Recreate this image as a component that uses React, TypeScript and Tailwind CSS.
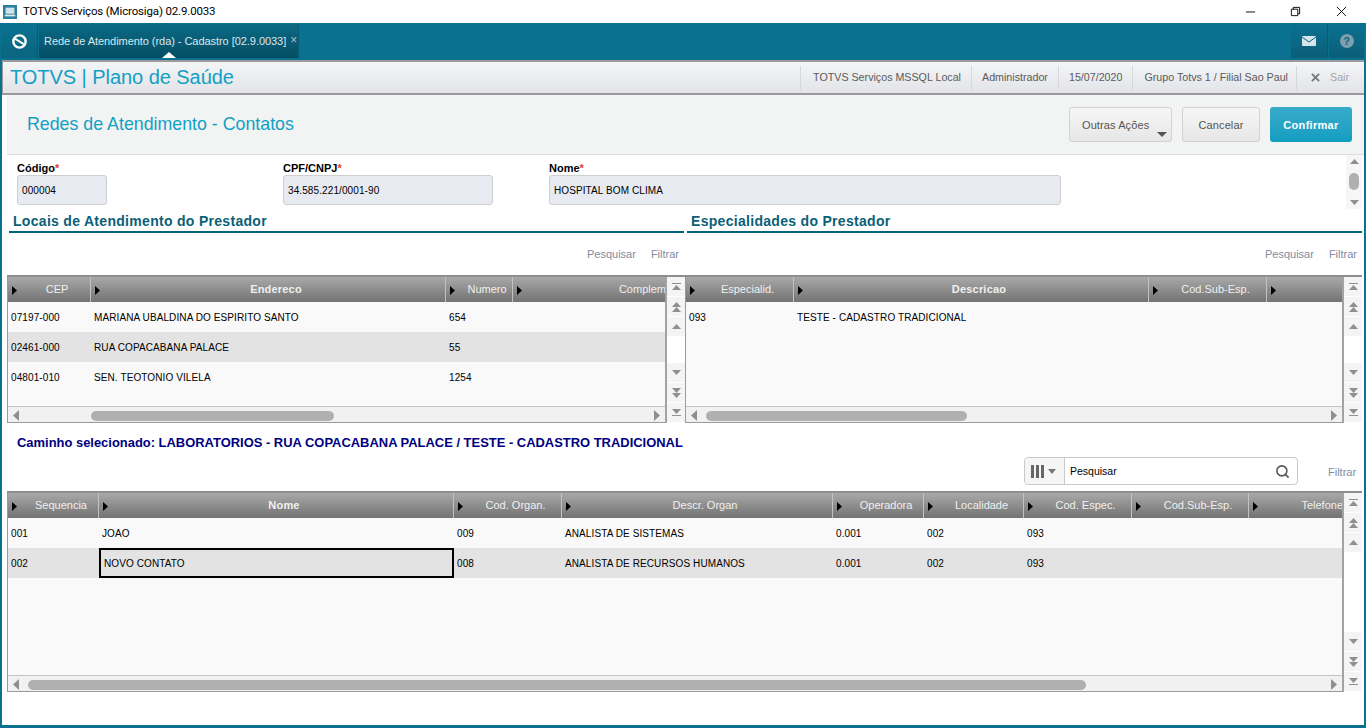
import { Search } from "lucide-react";

type Col = { label: string; w: string; bold?: boolean; right?: boolean };

const LEFT_COLS: Col[] = [
  { label: "CEP", w: "w-[83px]" },
  { label: "Endereco", w: "w-[355px]", bold: true },
  { label: "Numero", w: "w-[67px]" },
  { label: "Complem", w: "w-[153px]", right: true },
];
const RIGHT_COLS: Col[] = [
  { label: "Especialid.", w: "w-[108px]" },
  { label: "Descricao", w: "w-[355px]", bold: true },
  { label: "Cod.Sub-Esp.", w: "w-[118px]" },
  { label: "", w: "w-[75px]" },
];
const BOTTOM_COLS: Col[] = [
  { label: "Sequencia", w: "w-[91px]" },
  { label: "Nome", w: "w-[355px]", bold: true },
  { label: "Cod. Organ.", w: "w-[108px]" },
  { label: "Descr. Organ", w: "w-[271px]" },
  { label: "Operadora", w: "w-[91px]" },
  { label: "Localidade", w: "w-[100px]" },
  { label: "Cod. Espec.", w: "w-[108px]" },
  { label: "Cod.Sub-Esp.", w: "w-[117px]" },
  { label: "Telefone", w: "w-[94px]", right: true },
];

function Tri({ dir, className = "" }: { dir: "up" | "down" | "left" | "right"; className?: string }) {
  const points = {
    up: "0,7 5,0 10,7",
    down: "0,0 10,0 5,7",
    left: "7,0 7,10 0,5",
    right: "0,0 7,5 0,10",
  }[dir];
  const size = dir === "up" || dir === "down" ? "w-[9px] h-[5px]" : "w-[6px] h-[11px]";
  return (
    <svg
      viewBox={dir === "up" || dir === "down" ? "0 0 10 7" : "0 0 7 10"}
      preserveAspectRatio="none"
      className={`${size} fill-[#8f8f8f] shrink-0 ${className}`}
    >
      <polygon points={points} />
    </svg>
  );
}

function VScroll() {
  const btn = "h-[20px] flex flex-col items-center justify-center bg-[#f4f4f4] border-b border-white gap-px";
  return (
    <div className="w-[20px] shrink-0 flex flex-col justify-between bg-white border-l-2 border-[#a3a3a3]">
      <div className="flex flex-col">
        <div className={btn}>
          <div className="w-[9px] h-px bg-[#8f8f8f]" />
          <Tri dir="up" />
        </div>
        <div className={btn}>
          <Tri dir="up" className="-mb-px" />
          <Tri dir="up" />
        </div>
        <div className={btn}>
          <Tri dir="up" />
        </div>
      </div>
      <div className="flex flex-col">
        <div className={btn}>
          <Tri dir="down" />
        </div>
        <div className={btn}>
          <Tri dir="down" className="-mb-px" />
          <Tri dir="down" />
        </div>
        <div className={btn}>
          <Tri dir="down" />
          <div className="w-[9px] h-px bg-[#8f8f8f]" />
        </div>
      </div>
    </div>
  );
}

function HScroll({ left, width }: { left: string; width: string }) {
  return (
    <div className="h-[16px] shrink-0 flex items-center pt-[2px] bg-[#f1f1f1] border-t border-[#c4c4c4]">
      <Tri dir="left" className="ml-[5px]" />
      <div className={`${left} ${width} h-[10px] rounded-[5px] bg-[#b0b0b0]`} />
      <Tri dir="right" className="ml-auto mr-[5px]" />
    </div>
  );
}

function Grid({
  cols,
  rows,
  selected,
  focusCol,
  thumbLeft,
  thumbWidth,
  className,
}: {
  cols: Col[];
  rows: string[][];
  selected?: number;
  focusCol?: number;
  thumbLeft: string;
  thumbWidth: string;
  className: string;
}) {
  return (
    <div className={`flex ${className} border-t-2 border-[#8e8e8e]`}>
      <div className="flex-1 min-w-0 flex flex-col border-l border-b border-[#9a9a9a]">
        <div className="h-[25px] shrink-0 flex overflow-hidden bg-gradient-to-b from-[#a9a9a9] to-[#737373]">
          {cols.map((c, i) => (
            <div
              key={i}
              className={`${c.w} shrink-0 h-full flex items-center border-r border-[#c2c2c2] pl-[4px] last:border-r-0`}
            >
              <svg viewBox="0 0 5 9" className="w-[5px] h-[9px] fill-black shrink-0 mt-[2px]">
                <polygon points="0,0 5,4.5 0,9" />
              </svg>
              <span
                className={`flex-1 min-w-0 pl-[7px] whitespace-nowrap overflow-hidden text-[#f0f0f0] ${
                  c.right ? "text-right" : "text-center"
                } ${c.bold ? "font-bold tracking-[0.2px]" : ""}`}
              >
                {c.label}
              </span>
            </div>
          ))}
        </div>
        <div className="flex-1 min-h-0 bg-[#f9f9f9]">
          {rows.map((r, ri) => (
            <div
              key={ri}
              className={`h-[30px] flex items-center text-black text-[10px] tracking-[0.1px] ${
                selected === ri ? "bg-[#e3e3e3]" : ""
              }`}
            >
              {r.map((v, ci) => (
                <div
                  key={ci}
                  className={`${cols[ci].w} shrink-0 h-full flex items-center overflow-hidden whitespace-nowrap ${
                    selected === ri && focusCol === ci ? "border-2 border-black pl-[3px]" : "pl-[3px]"
                  }`}
                >
                  {v}
                </div>
              ))}
            </div>
          ))}
        </div>
        <HScroll left={thumbLeft} width={thumbWidth} />
      </div>
      <VScroll />
    </div>
  );
}

function Field({ label, value, width }: { label: string; value: string; width: string }) {
  return (
    <div className={`${width} shrink-0`}>
      <div className="h-[14px] flex items-center font-bold text-black text-[11px]">
        {label}
        <span className="text-[#e53935]">*</span>
      </div>
      <div className="h-[30px] flex items-center px-[4px] rounded-[3px] bg-[#e7eaf1] border border-[#cfcfcf] text-black text-[10px] tracking-[0.1px]">
        {value}
      </div>
    </div>
  );
}

function SectionTitle({ children, className }: { children: string; className: string }) {
  return (
    <div className={`h-[24px] flex items-end pl-[4px] border-b-2 border-[#00647c] text-[#0b6078] font-bold text-[14px] leading-[19px] tracking-[0.3px] ${className}`}>
      {children}
    </div>
  );
}

function TopAction({ children }: { children: string }) {
  return <div className="text-[#7f8ba3] text-[11px]">{children}</div>;
}

export default function App() {
  return (
    <div
      className="w-[1366px] h-[728px] overflow-hidden flex flex-col bg-white text-[11px]"
      style={{ fontFamily: '"Liberation Sans", Arial, sans-serif' }}
    >
      {/* window title bar */}
      <div className="h-[23px] shrink-0 flex items-center bg-white">
        <svg viewBox="0 0 16 16" className="w-[14px] h-[14px] ml-[3px]">
          <rect width="16" height="16" fill="#2d7f9e" />
          <rect x="3" y="3" width="10" height="7" fill="#cfe3ea" />
          <rect x="2" y="11" width="12" height="2" fill="#dfeaef" />
        </svg>
        <span className="ml-[6px] text-[11.5px] tracking-[-0.15px] text-black" style={{ fontFamily: "Roboto, sans-serif" }}>
          TOTVS Serviços (Microsiga) 02.9.0033
        </span>
        <div className="ml-auto flex items-center">
          <svg viewBox="0 0 12 12" className="w-[11px] h-[11px] mr-[34px] stroke-black fill-none">
            <path d="M1 6.5h10" />
          </svg>
          <svg viewBox="0 0 12 12" className="w-[11px] h-[11px] mr-[35px] stroke-black fill-none">
            <path d="M1.5 3.5h7v7h-7zM3.5 3.5v-2h7v7h-2" />
          </svg>
          <svg viewBox="0 0 12 12" className="w-[11px] h-[11px] mr-[19px] stroke-black fill-none">
            <path d="M1 1l10 10M11 1L1 11" />
          </svg>
        </div>
      </div>

      {/* nav */}
      <div className="h-[37px] shrink-0 flex bg-[#0b7191] pt-px">
        <div className="w-[37px] ml-px h-[34px] flex items-center justify-center border-r border-[#095a72] bg-gradient-to-b from-[#0b7191] to-[#0a6580]">
          <svg viewBox="0 0 18 18" className="w-[17px] h-[17px] fill-none">
            <circle cx="9" cy="9" r="6.5" stroke="white" strokeWidth="2.6" />
            <path d="M4.5 6.2L13.5 11.8" stroke="white" strokeWidth="2" />
          </svg>
        </div>
        <div className="relative w-[260px] h-[34px] ml-px flex items-center pl-[5px] bg-gradient-to-b from-[#0b6a86] to-[#054e63] text-[#dbe7ec] text-[11px] whitespace-nowrap tracking-[-0.05px] border-r border-[#095a72]">
          Rede de Atendimento (rda) - Cadastro [02.9.0033]
          <span className="ml-[4px] -mt-[2px] text-[#a9c4ce] text-[12px]">×</span>
          <div className="absolute left-[123px] bottom-0 w-0 h-0 border-x-[7px] border-x-transparent border-b-[6px] border-b-white" />
        </div>
        <div className="ml-auto flex h-[34px]">
          <div className="w-[37px] flex items-center justify-center bg-gradient-to-b from-[#0b7191] to-[#0a5f78] border-r border-[#0a5a72]">
            <svg viewBox="0 0 14 10" className="w-[14px] h-[10px]">
              <rect width="14" height="10" rx="1" fill="#d6e5ea" />
              <path d="M0 1l7 5 7-5" fill="none" stroke="#0a6580" strokeWidth="1" />
            </svg>
          </div>
          <div className="w-[35px] mr-[2px] ml-px flex items-center justify-center bg-gradient-to-b from-[#0b7191] to-[#0a5f78]">
            <div className="w-[14px] h-[14px] rounded-full bg-[#7d9fae] text-[#0a6580] font-bold text-[11px] flex items-center justify-center">
              ?
            </div>
          </div>
        </div>
      </div>

      {/* body */}
      <div className="flex-1 min-h-0 flex flex-col border-x-2 border-b-[3px] border-[#0b7191]">
        <div className="h-[35px] shrink-0 flex items-center border-y-2 border-[#9b9b9b] border-l bg-gradient-to-b from-[#f4f5f7] to-[#e2e4e8]">
          <div className="ml-[7px] -mt-px text-[#12a0c4] text-[20px] tracking-[-0.05px]">TOTVS | Plano de Saúde</div>
          <div className="ml-auto flex items-center h-[24px] text-[#5b5b5b] text-[10.7px]">
            <div className="h-full flex items-center pl-[12px] pr-[10px] border-x border-[#d8d8d8]">TOTVS Serviços MSSQL Local</div>
            <div className="h-full flex items-center px-[10px] border-r border-[#d8d8d8]">Administrador</div>
            <div className="h-full flex items-center px-[10px] border-r border-[#d8d8d8]">15/07/2020</div>
            <div className="h-full flex items-center pl-[11px] pr-[8px] border-r border-[#d8d8d8]">Grupo Totvs 1 / Filial Sao Paul</div>
            <div className="h-full w-[67px] flex items-center pl-[14px]">
              <svg viewBox="0 0 10 10" className="w-[9px] h-[9px] stroke-[#777] fill-none" strokeWidth="2">
                <path d="M1 1l8 8M9 1L1 9" />
              </svg>
              <span className="ml-[10px] text-[#a6a6a6]">Sair</span>
            </div>
          </div>
        </div>

        <div className="h-[60px] shrink-0 ml-[5px] flex items-center bg-[#f2f3f3] border-b border-[#dcdcdc]">
          <div className="ml-[20px] text-[#12a0c4] text-[17.8px]">Redes de Atendimento - Contatos</div>
          <div className="ml-auto mr-[12px] flex items-center gap-[10px] text-[#555] text-[11px] tracking-[0.1px]">
            <div className="relative w-[103px] h-[35px] flex items-center pl-[12px] pt-px rounded-[3px] border border-[#d2d2d2] bg-gradient-to-b from-[#f6f6f6] to-[#e7e7e7]">
              Outras Ações
              <div className="absolute right-[4px] bottom-[4px] w-0 h-0 border-x-[5px] border-x-transparent border-t-[5px] border-t-[#555]" />
            </div>
            <div className="w-[78px] h-[35px] flex items-center justify-center pt-px rounded-[3px] border border-[#d2d2d2] bg-gradient-to-b from-[#f6f6f6] to-[#e7e7e7]">
              Cancelar
            </div>
            <div className="w-[82px] h-[35px] flex items-center justify-center pt-px rounded-[3px] bg-gradient-to-b from-[#38abca] to-[#0f9ec1] text-white font-bold tracking-[0.3px]">
              Confirmar
            </div>
          </div>
        </div>

        {/* form */}
        <div className="h-[54px] shrink-0 flex pt-[6px] pl-[15px] relative">
          <Field label="Código" value="000004" width="w-[90px]" />
          <Field label="CPF/CNPJ" value="34.585.221/0001-90" width="w-[210px] ml-[176px]" />
          <Field label="Nome" value="HOSPITAL BOM CLIMA" width="w-[512px] ml-[56px]" />
          <div className="absolute right-[2px] top-0 bottom-0 w-[16px] flex flex-col items-center justify-between py-[4px] bg-[#f6f6f6]">
            <Tri dir="up" />
            <div className="absolute top-[18px] w-[10px] h-[17px] rounded-[5px] bg-[#b0b0b0]" />
            <Tri dir="down" />
          </div>
        </div>

        {/* section titles */}
        <div className="h-[24px] shrink-0 flex">
          <SectionTitle className="ml-[7px] w-[675px]">Locais de Atendimento do Prestador</SectionTitle>
          <SectionTitle className="ml-[3px] w-[675px]">Especialidades do Prestador</SectionTitle>
        </div>

        {/* table tools */}
        <div className="h-[42px] shrink-0 flex items-center">
          <div className="w-[684px] flex justify-end gap-[15px] pr-[7px]">
            <TopAction>Pesquisar</TopAction>
            <TopAction>Filtrar</TopAction>
          </div>
          <div className="w-[678px] flex justify-end gap-[15px] pr-[7px]">
            <TopAction>Pesquisar</TopAction>
            <TopAction>Filtrar</TopAction>
          </div>
        </div>

        {/* two grids */}
        <div className="h-[148px] shrink-0 flex">
          <Grid
            className="ml-[5px] w-[678px]"
            cols={LEFT_COLS}
            rows={[
              ["07197-000", "MARIANA UBALDINA DO ESPIRITO SANTO", "654", ""],
              ["02461-000", "RUA COPACABANA PALACE", "55", ""],
              ["04801-010", "SEN. TEOTONIO VILELA", "1254", ""],
            ]}
            selected={1}
            thumbLeft="ml-[72px]"
            thumbWidth="w-[243px]"
          />
          <Grid
            className="w-[677px]"
            cols={RIGHT_COLS}
            rows={[["093", "TESTE - CADASTRO TRADICIONAL", "", ""]]}
            thumbLeft="ml-[9px]"
            thumbWidth="w-[261px]"
          />
        </div>

        <div className="h-[34px] shrink-0 flex items-center pt-[5px] pl-[15px] text-[#00007f] font-bold text-[12.94px]">
          Caminho selecionado: LABORATORIOS - RUA COPACABANA PALACE / TESTE - CADASTRO TRADICIONAL
        </div>

        {/* search */}
        <div className="h-[34px] shrink-0 flex items-start">
          <div className="ml-[1022px] w-[274px] h-[28px] flex items-center rounded-[4px] border border-[#c9c9c9] bg-white">
            <div className="w-[40px] h-full shrink-0 flex items-center pl-[6px] gap-[4px] border-r border-[#c9c9c9] bg-[#f5f5f5] rounded-l-[4px]">
              <div className="flex gap-[2px]">
                <div className="w-[3px] h-[13px] bg-[#666]" />
                <div className="w-[3px] h-[13px] bg-[#666]" />
                <div className="w-[3px] h-[13px] bg-[#666]" />
              </div>
              <div className="w-0 h-0 border-x-[4px] border-x-transparent border-t-[5px] border-t-[#777]" />
            </div>
            <span className="ml-[5px] mt-px text-black text-[10.5px]">Pesquisar</span>
            <Search className="ml-auto mr-[7px] w-[15px] h-[15px] text-[#555]" strokeWidth={2.5} />
          </div>
          <div className="ml-[30px] mt-[7px]">
            <TopAction>Filtrar</TopAction>
          </div>
        </div>

        <Grid
          className="ml-[5px] w-[1355px] h-[201px] shrink-0"
          cols={BOTTOM_COLS}
          rows={[
            ["001", "JOAO", "009", "ANALISTA DE SISTEMAS", "0.001", "002", "093", "", ""],
            ["002", "NOVO CONTATO", "008", "ANALISTA DE RECURSOS HUMANOS", "0.001", "002", "093", "", ""],
          ]}
          selected={1}
          focusCol={1}
          thumbLeft="ml-[9px]"
          thumbWidth="w-[1058px]"
        />
      </div>
    </div>
  );
}
